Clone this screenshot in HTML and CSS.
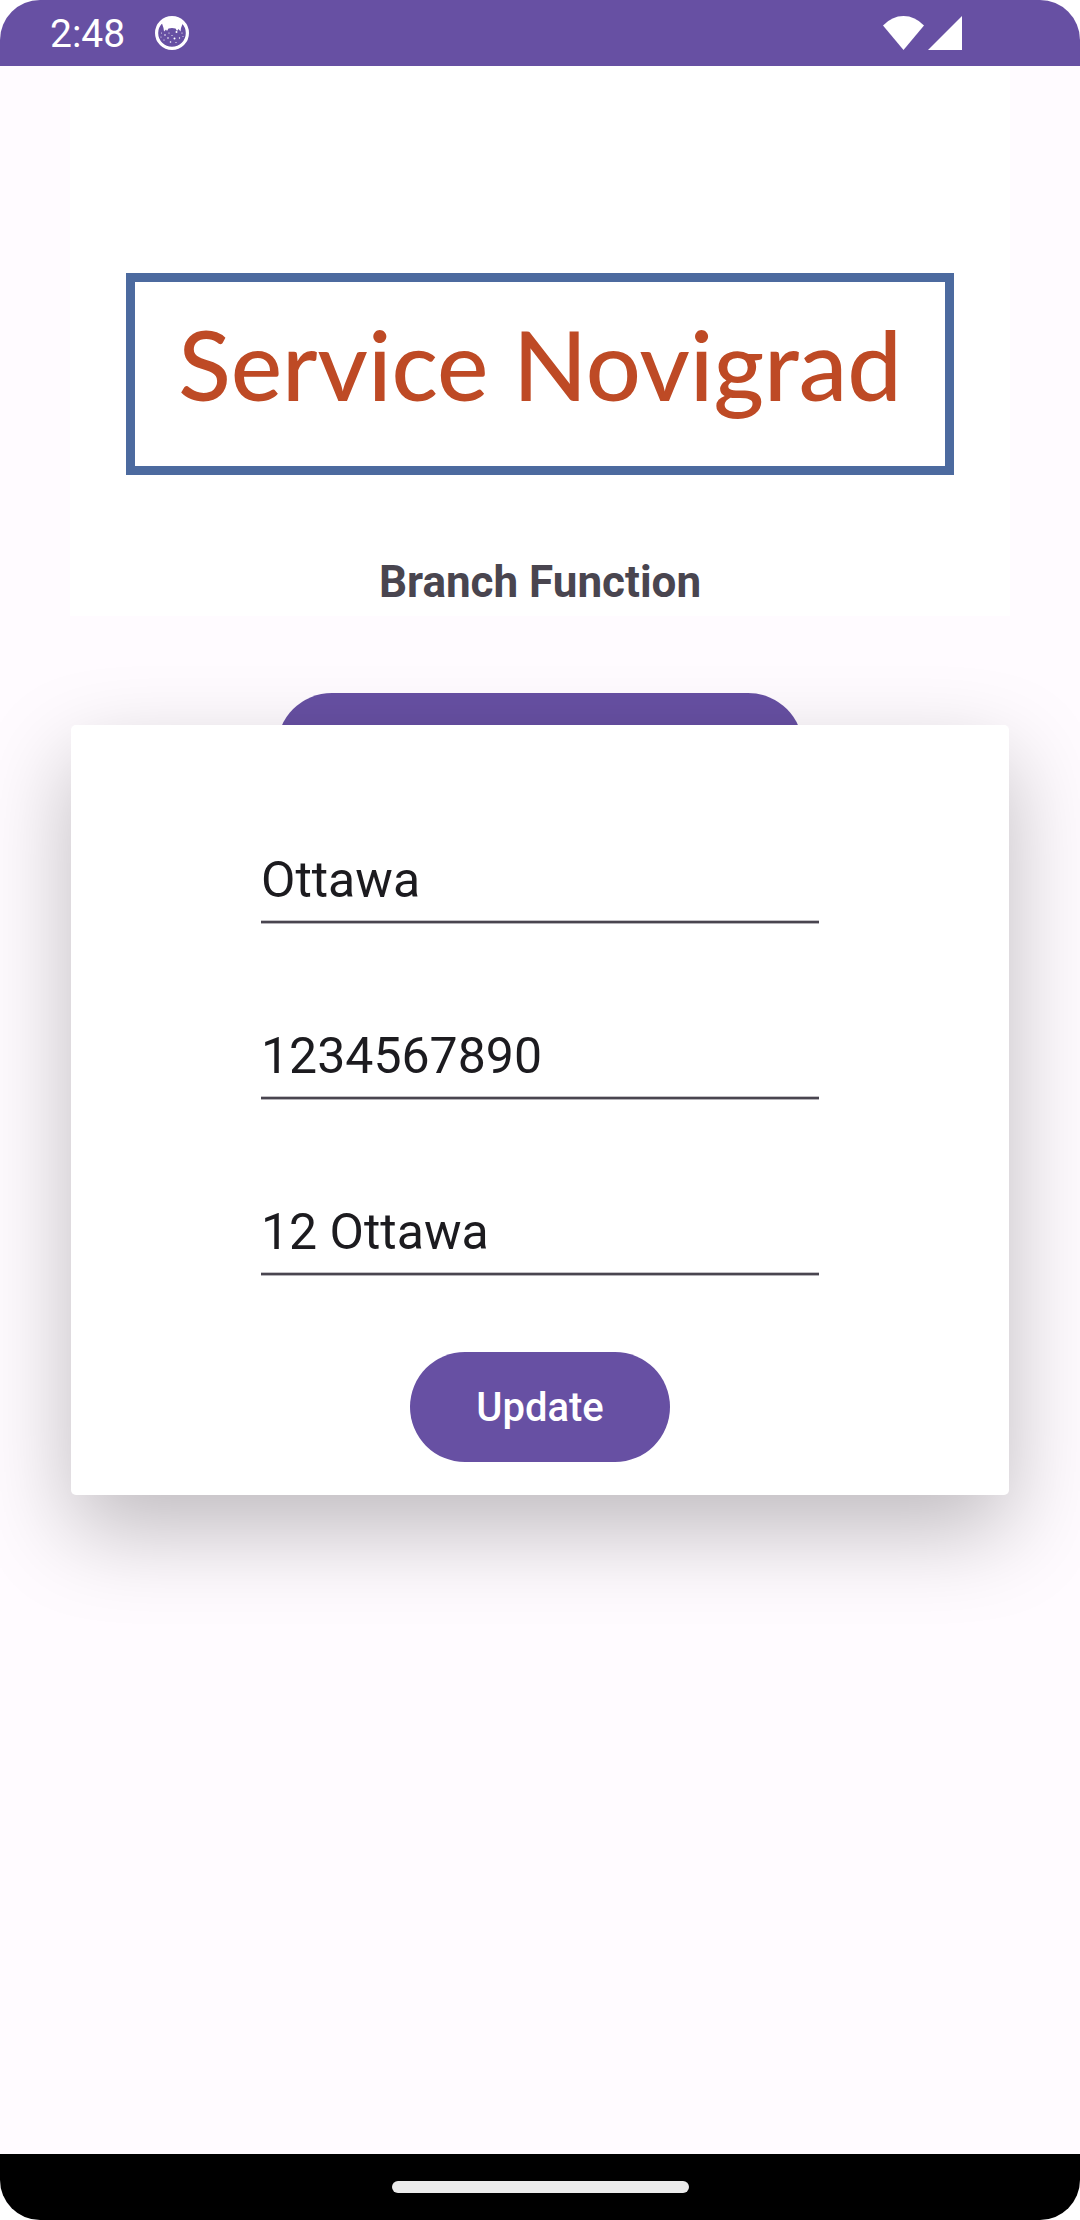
FILE: index.html
```html
<!DOCTYPE html>
<html lang="en">
<head>
  <meta charset="utf-8">
  <meta name="viewport" content="width=device-width, initial-scale=1">
  <title>Service Novigrad</title>
  <link rel="stylesheet" href="styles.css">
</head>
<body>
  <div class="screen">
    <header class="status-bar">
      <span class="clock">2:48</span>
      <svg class="emblem" viewBox="0 0 34 34" aria-hidden="true">
        <circle cx="17" cy="17" r="15.4" fill="none" stroke="#fff" stroke-width="3.2"/>
        <path d="M4 10 7 7.5 8.5 12 9 15.5 11 13.5 12 15 13.500 12.500Q17 11.500 20.500 12.500L22 15 23.500 13 25.500 15.500 26 12 27.500 8 30 10Q26 1.500 17 1.500 8 1.500 4 10Z" fill="#fff"/>
        <g fill="#fff">
          <circle cx="21.500" cy="16" r="1"/><circle cx="10" cy="19" r=".8"/><circle cx="14" cy="17" r=".6"/>
          <circle cx="6.500" cy="17" r=".5"/><circle cx="27" cy="17" r=".6"/><circle cx="19.500" cy="22.500" r="1"/>
          <circle cx="13" cy="22" r=".8"/><circle cx="24.500" cy="22" r=".7"/><circle cx="9" cy="24" r=".6"/>
          <circle cx="17" cy="19.500" r=".6"/><circle cx="15.500" cy="26" r=".8"/><circle cx="21" cy="26.500" r=".6"/>
          <circle cx="28" cy="20.500" r=".5"/><circle cx="6" cy="21" r=".5"/>
        </g>
      </svg>
      <span class="signals">
        <svg class="wifi" viewBox="0 0 41 34" aria-hidden="true"><path d="M0 9.500Q9 0 20.500 0T41 9.500L20.500 34Z" fill="#fff"/></svg>
        <svg class="cell" viewBox="0 0 34 34" aria-hidden="true"><path d="M34 0V34H0Z" fill="#fff"/></svg>
      </span>
    </header>

    <main class="content">
      <section class="banner">
        <div class="logo">Service Novigrad</div>
        <h1 class="title">Branch Function</h1>
      </section>
      <button class="button button-wide" type="button" aria-label="Branch profile"></button>
    </main>

    <footer class="nav-bar"><span class="nav-handle"></span></footer>
  </div>

  <div class="overlay">
    <form class="dialog" role="dialog" aria-label="Branch details">
      <div class="fields">
        <input class="field" type="text" aria-label="Branch name" value="Ottawa">
        <input class="field" type="tel" aria-label="Phone number" value="1234567890">
        <input class="field" type="text" aria-label="Address" value="12 Ottawa">
      </div>
      <button class="button" type="button">Update</button>
    </form>
  </div>
</body>
</html>
```

FILE: styles.css
```css
* {
  box-sizing: border-box;
}

body {
  margin: 0;
  background: #fff;
  font-family: Roboto, "Liberation Sans", sans-serif;
  color: #1c1b1f;
}

.screen {
  display: flex;
  flex-direction: column;
  min-height: 100vh;
  overflow: hidden;
  border-radius: 40px;
  background: #fffbff;
}

.status-bar {
  display: flex;
  align-items: center;
  height: 66px;
  padding: 0 118px 0 50px;
  background: #6750a3;
  color: #fff;
}

.clock {
  padding-top: 2px;
  font-size: 39px;
  line-height: 48px;
}

.emblem {
  width: 34px;
  height: 34px;
  margin-left: 30px;
}

.signals {
  display: flex;
  gap: 4px;
  margin-left: auto;
}

.wifi {
  width: 41px;
  height: 34px;
}

.cell {
  width: 34px;
  height: 34px;
}

.content {
  display: flex;
  flex: 1;
  flex-direction: column;
  align-items: center;
  padding: 0 70px;
}

.banner {
  align-self: stretch;
  padding: 207px 56px 8px;
  background: #fff;
  text-align: center;
}

.logo {
  padding: 26px 0 46px;
  border: 9px solid #4c6a9f;
  color: #be4a25;
  font-family: Lato, "Open Sans", sans-serif;
  font-size: 97px;
  font-weight: 500;
  line-height: 112px;
  white-space: nowrap;
}

.title {
  margin: 81px 0 0;
  color: #49454f;
  font-size: 44px;
  font-weight: 700;
  line-height: 52px;
}

.button {
  height: 110px;
  padding: 2px 66px 0;
  border: 0;
  border-radius: 55px;
  background: #6750a3;
  color: #fff;
  font: 500 40px/48px Roboto, "Liberation Sans", sans-serif;
}

.button-wide {
  width: 56%;
  margin-top: 77px;
}

.nav-bar {
  display: flex;
  align-items: center;
  justify-content: center;
  height: 66px;
  background: #000;
}

.nav-handle {
  width: 297px;
  height: 12px;
  border-radius: 6px;
  background: #ebebeb;
}

.overlay {
  position: fixed;
  inset: 0;
  display: flex;
  align-items: center;
  padding: 0 71px;
}

.dialog {
  display: flex;
  flex: 1;
  flex-direction: column;
  align-items: center;
  gap: 77px;
  padding: 125px 190px 33px;
  border-radius: 5px;
  background: #fff;
  box-shadow: 0 35px 90px rgba(0, 0, 0, 0.26);
}

.fields {
  display: flex;
  flex-direction: column;
  align-self: stretch;
  gap: 103px;
}

.field {
  width: 100%;
  height: 73px;
  padding: 0 0 11px;
  border: 0;
  border-bottom: 2px solid #49454f;
  border-radius: 0;
  outline: 0;
  background: none;
  box-shadow: 0 1px #b4b2b7, inset 0 -1px #c4c2c6;
  color: #1c1b1f;
  font: 400 50px/60px Roboto, "Liberation Sans", sans-serif;
}
```
